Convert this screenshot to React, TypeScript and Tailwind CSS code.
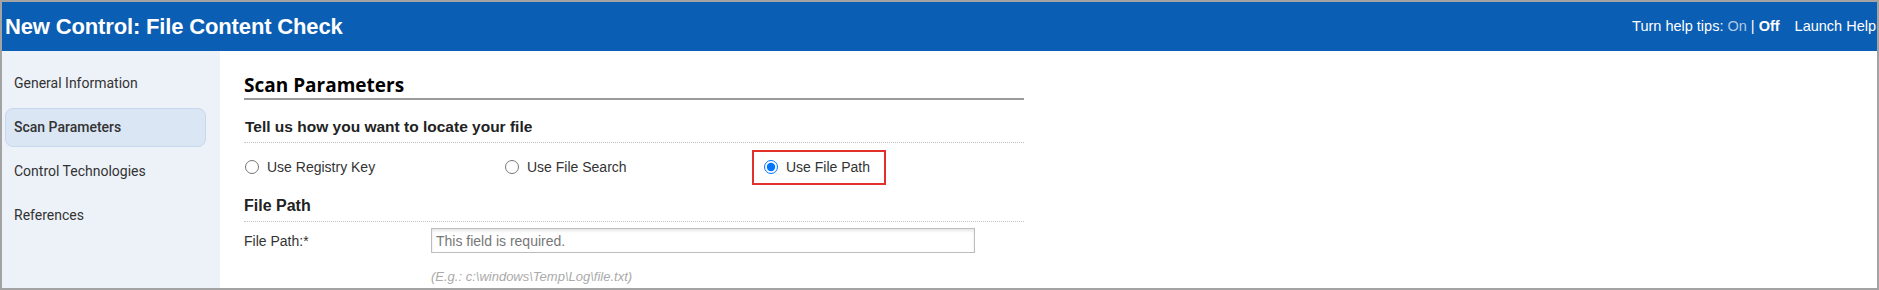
import { useState } from "react";

const navItems = [
  "General Information",
  "Scan Parameters",
  "Control Technologies",
  "References",
];

export default function App() {
  const [mode, setMode] = useState("path");

  return (
    <div className="h-[290px] w-[1879px] overflow-hidden border-2 border-[#a3a3a3] bg-white font-['Liberation_Sans',Arial,sans-serif]">
      {/* Header */}
      <div className="flex h-[49px] items-center justify-between bg-[#0a5eb3] pl-[3px] pr-[1px] text-white">
        <h1 className="text-[22px] font-bold tracking-[-0.15px]">New Control: File Content Check</h1>
        <div className="flex items-center text-[14.5px]">
          <span>Turn help tips:&nbsp;</span>
          <span className="text-[#b3c9e6]">On</span>
          <span>&nbsp;|&nbsp;</span>
          <span className="font-bold">Off</span>
          <span className="ml-[15px]">Launch Help</span>
        </div>
      </div>

      <div className="flex h-[237px]">
        {/* Sidebar */}
        <div className="w-[218px] shrink-0 bg-[#edf2f9] pt-[13px] pl-[3px] font-['Roboto',sans-serif] text-[14px] text-[#333]">
          {navItems.map((item) => (
            <div
              key={item}
              className={
                item === "Scan Parameters"
                  ? "mb-[5px] flex h-[39px] w-[201px] items-center rounded-[8px] border border-[#c6d8ee] bg-[#dae6f4] pl-[8px] font-medium text-[#333]"
                  : "mb-[5px] flex h-[39px] w-[201px] items-center pl-[9px]"
              }
            >
              {item}
            </div>
          ))}
        </div>

        {/* Content */}
        <div className="w-[804px] pl-[24px] pt-[21px]">
          <h2 className="border-b-2 border-[#9a9a9a] font-['Open_Sans',sans-serif] text-[19px] font-bold leading-[26px] text-black">
            Scan Parameters
          </h2>
          <h3 className="mt-[18px] border-b border-dotted border-[#c4c4c4] pb-[6px] pl-[1px] text-[15.5px] font-bold leading-[18px] text-[#222]">
            Tell us how you want to locate your file
          </h3>

          <div className="flex h-[48px] items-center text-[14px] text-[#333]">
            <label className="flex w-[261px] items-center gap-[8px] pl-[1px]">
              <input
                type="radio"
                name="mode"
                className="m-0 h-[14px] w-[14px]"
                checked={mode === "registry"}
                onChange={() => setMode("registry")}
              />
              Use Registry Key
            </label>
            <label className="flex w-[247px] items-center gap-[8px]">
              <input
                type="radio"
                name="mode"
                className="m-0 h-[14px] w-[14px]"
                checked={mode === "search"}
                onChange={() => setMode("search")}
              />
              Use File Search
            </label>
            <label className="flex h-[35px] w-[134px] items-center gap-[8px] border-2 border-[#e3302c] pl-[10px]">
              <input
                type="radio"
                name="mode"
                className="m-0 h-[14px] w-[14px]"
                checked={mode === "path"}
                onChange={() => setMode("path")}
              />
              Use File Path
            </label>
          </div>

          <h3 className="mt-[6px] border-b border-dotted border-[#c4c4c4] pb-[6px] text-[16px] font-bold leading-[18px] text-[#222]">
            File Path
          </h3>

          <div className="mt-[6px] flex items-start text-[14px] text-[#333]">
            <div className="w-[187px] pt-[4px] leading-[18px]">File Path:*</div>
            <div>
              <input
                type="text"
                placeholder="This field is required."
                className="block h-[25px] w-[544px] border border-[#bdbdbd] px-[4px] text-[14px] text-[#333] shadow-[inset_0_2px_3px_rgba(0,0,0,0.1)] outline-none placeholder:text-[#777]"
              />
              <div className="mt-[16px] text-[13px] leading-[16px] italic text-[#aaa]">
                (E.g.: c:\windows\Temp\Log\file.txt)
              </div>
            </div>
          </div>
        </div>
      </div>
    </div>
  );
}
